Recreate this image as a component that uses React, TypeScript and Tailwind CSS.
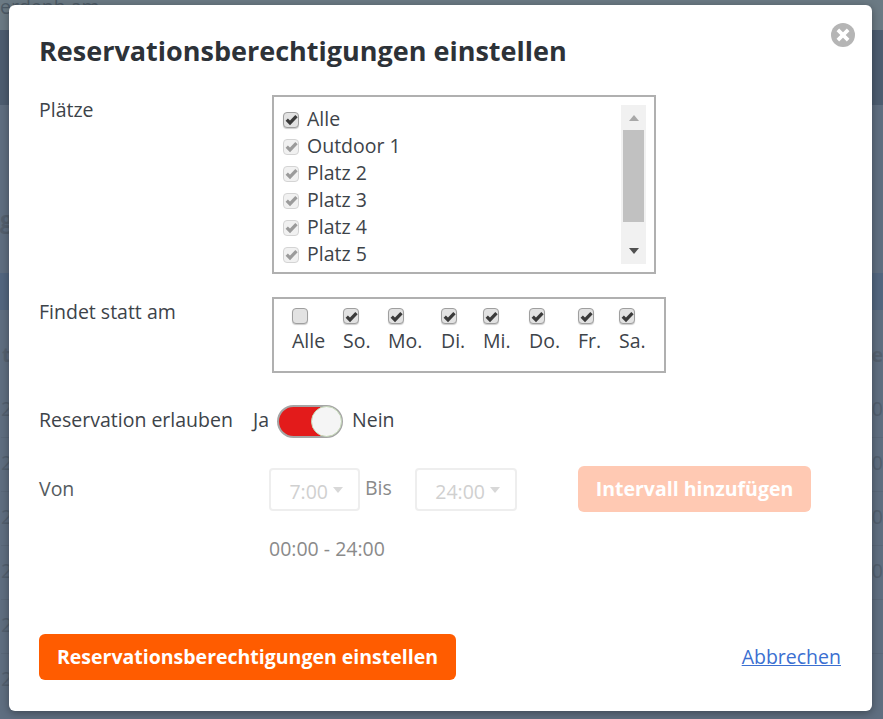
import type { ReactNode } from 'react'

const courts = ['Outdoor 1', 'Platz 2', 'Platz 3', 'Platz 4', 'Platz 5']

const days = [
  { label: 'Alle', checked: false, width: 'w-[51px]' },
  { label: 'So.', checked: true, width: 'w-[45px]' },
  { label: 'Mo.', checked: true, width: 'w-[53px]' },
  { label: 'Di.', checked: true, width: 'w-[42px]' },
  { label: 'Mi.', checked: true, width: 'w-[46px]' },
  { label: 'Do.', checked: true, width: 'w-[49px]' },
  { label: 'Fr.', checked: true, width: 'w-[41px]' },
  { label: 'Sa.', checked: true, width: 'w-[41px]' },
]

function Checkbox({ checked = true, disabled = false }: { checked?: boolean; disabled?: boolean }) {
  return (
    <span
      className={`flex h-4 w-4 shrink-0 items-center justify-center rounded-[4px] border ${
        disabled
          ? 'border-[#d4d4d4] bg-[#f1f1f1]'
          : 'border-[#9f9f9f] bg-[#e2e2e2] shadow-[0_1px_1px_rgba(0,0,0,0.2)]'
      }`}
    >
      {checked && (
        <svg viewBox="0 0 12 12" className="h-[13px] w-[13px]">
          <path
            d="M1.6 6.2 L4.6 9.2 L10.6 2.8"
            fill="none"
            stroke={disabled ? '#9b9b9b' : '#3a3a3a'}
            strokeWidth="3"
          />
        </svg>
      )}
    </span>
  )
}

function Caret({ className }: { className: string }) {
  return (
    <svg viewBox="0 0 10 6" className={className}>
      <path d="M0 0 L10 0 L5 6 Z" fill="currentColor" />
    </svg>
  )
}

function Row({ label, children, className }: { label: string; children: ReactNode; className: string }) {
  return (
    <div className={`flex ${className}`}>
      <div className="w-[233px] shrink-0 pt-[2px]">{label}</div>
      {children}
    </div>
  )
}

function TimeSelect({ value, className }: { value: string; className: string }) {
  return (
    <div
      className={`flex h-[43px] items-center justify-end rounded-[4px] border-2 border-[#eeeeee] pr-[14px] pt-1 text-[#d0d0d0] ${className}`}
    >
      {value}
      <Caret className="mb-1 ml-[4px] h-[6px] w-[12px] text-[#d8d8d8]" />
    </div>
  )
}

export default function App() {
  return (
    <div className="relative h-[719px] w-[883px] overflow-hidden bg-[#5f6e80] font-['Open_Sans',sans-serif] text-[19.5px] text-[#3d4349]">
      {/* page behind the overlay */}
      <div className="h-[30px] bg-[#6b7a84] text-[19.5px] leading-[14px] text-[#4d5a66]">erdenb am</div>
      <div className="h-[75px] bg-[#4d5d70]" />
      <div className="h-[168px] pt-[96px] text-[24px] font-bold text-[#535f6d]">g</div>
      <div className="h-[37px] bg-[#52667f]" />
      <div className="flex h-[74px] justify-between pl-[2px] pt-[30px] font-bold text-[#55616f]">
        <span>t</span>
        <span>re</span>
      </div>
      <div className="divide-y divide-[#5a6879] pl-[1px] text-[#525f6e]">
        {[0, 1, 2, 3, 4, 5].map((i) => (
          <div key={i} className="flex h-[54px] justify-between leading-[50px]">
            <span>2</span>
            {i < 4 && <span>00</span>}
          </div>
        ))}
      </div>

      <div className="absolute left-[9px] top-[5px] flex h-[706px] w-[863px] flex-col rounded-[6px] bg-white pl-[30px] pr-[31px] pt-[28px] shadow-[0_2px_8px_rgba(0,0,0,0.35)]">
        <button className="absolute right-[17px] top-[18px] flex h-6 w-6 items-center justify-center rounded-full bg-[#b5b5b5]">
          <svg viewBox="0 0 14 14" className="h-4 w-4">
            <path d="M2.5 2.5 L11.5 11.5 M11.5 2.5 L2.5 11.5" stroke="#fff" strokeWidth="3.2" />
          </svg>
        </button>

        <h1 className="text-[27px] font-bold leading-[36px] text-[#2d3238]">Reservationsberechtigungen einstellen</h1>

        <Row label="Plätze" className="mt-[26px] leading-[26px]">
          <div className="flex h-[179px] w-[384px] border-2 border-[#b0b0b0] pl-[9px] pr-[8px] pt-2">
            <div className="flex-1 leading-[27px]">
              <label className="flex items-center gap-2">
                <span className="pt-[2px]">
                  <Checkbox />
                </span>
                Alle
              </label>
              {courts.map((court) => (
                <label key={court} className="flex items-center gap-2">
                  <span className="pt-[2px]">
                    <Checkbox disabled />
                  </span>
                  {court}
                </label>
              ))}
            </div>
            <div className="flex h-[159px] w-[25px] flex-col items-center bg-[#f1f1f1]">
              <div className="flex h-[25px] items-center">
                <Caret className="h-[6px] w-[12px] rotate-180 text-[#a8a8a8]" />
              </div>
              <div className="h-[92px] w-[21px] bg-[#c1c1c1]" />
              <div className="flex flex-1 items-end pb-[10px]">
                <Caret className="h-[6px] w-[12px] text-[#505050]" />
              </div>
            </div>
          </div>
        </Row>

        <Row label="Findet statt am" className="mt-[23px] leading-[26px]">
          <div className="flex h-[76px] w-[394px] border-2 border-[#b0b0b0] pl-[18px] pt-[9px]">
            {days.map((day) => (
              <div key={day.label} className={`${day.width} shrink-0`}>
                <Checkbox checked={day.checked} />
                <div className="mt-[4px]">{day.label}</div>
              </div>
            ))}
          </div>
        </Row>

        <div className="mt-[30px] flex h-[34px] items-center">
          <span className="w-[214px] whitespace-nowrap">Reservation erlauben</span>
          <span className="w-[24px]">Ja</span>
          <span className="mt-[2px] flex h-[33px] w-[66px] items-center justify-end rounded-full border-2 border-[#a5a5a5] bg-[#e31b1b]">
            <span className="-mr-[1px] h-[31px] w-[31px] rounded-full border border-[#c4d8b8] bg-[#f5f5f5]" />
          </span>
          <span className="ml-[9px]">Nein</span>
        </div>

        <div className="mt-[29px] flex text-[#555b60]">
          <div className="w-[230px] pt-[10px] leading-[26px]">Von</div>
          <TimeSelect value="7:00" className="mt-[2px] w-[91px]" />
          <span className="ml-[5px] w-[50px] pt-[9px] leading-[26px] text-[#8a8a8a]">Bis</span>
          <TimeSelect value="24:00" className="mt-[2px] w-[102px]" />
          <button className="ml-[61px] h-[46px] w-[233px] rounded-[6px] bg-[#ffc9b3] text-[19.5px] font-bold text-white">
            Intervall hinzufügen
          </button>
        </div>

        <div className="ml-[230px] mt-[24px] leading-[26px] text-[#8a8a8a]">00:00 - 24:00</div>

        <div className="mt-[72px] flex items-center justify-between">
          <button className="h-[46px] w-[417px] rounded-[6px] bg-[#ff5c00] text-[19.5px] font-bold text-white">
            Reservationsberechtigungen einstellen
          </button>
          <a href="#" className="text-[#3b6fd1] underline">
            Abbrechen
          </a>
        </div>
      </div>
    </div>
  )
}
